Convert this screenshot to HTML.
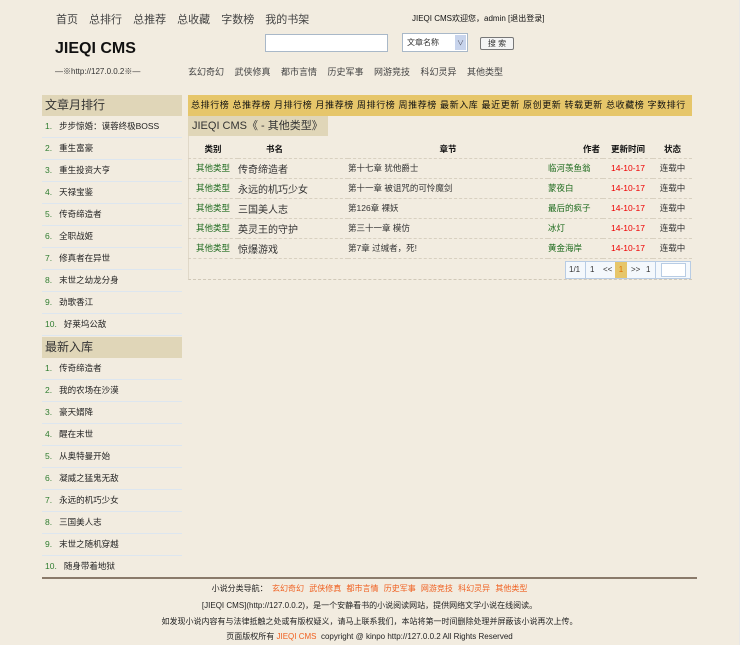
<!DOCTYPE html>
<html><head><meta charset="utf-8"><style>
*{margin:0;padding:0;box-sizing:border-box}
body{width:750px;height:645px;background:#f2ece0;font-family:"Liberation Sans","Noto Sans CJK SC",sans-serif;font-size:9px;color:#333;position:relative;overflow:hidden}
.a{position:absolute;white-space:nowrap}
.sb{position:absolute;left:739px;top:0;width:11px;height:645px;background:#fff;border-left:1px solid #e8e8e8}
.side{position:absolute;left:42px;width:140px}
.side h3{height:21px;background:#e0d6b8;font-weight:normal;font-size:12px;line-height:21px;padding-left:3px;color:#333}
.side li{list-style:none;height:22px;line-height:21px;border-bottom:1px solid #dde6ef;padding-left:3px;font-size:8.5px;color:#222}
.side li b{font-weight:normal;color:#2f7d2f;margin-right:7px}
table{border-collapse:collapse;position:absolute;left:188px;top:140px;width:504px;font-size:8.5px}
td,th{height:20px;border-bottom:1px dashed #d8d0c0;white-space:nowrap}
th{font-weight:bold;height:18px;color:#111}
.g{color:#1e6b1e}.r{color:#e00}
</style></head><body>
<div class="sb"></div>
<div class="a" style="left:56px;top:11px;font-size:11px;color:#444;word-spacing:8px">首页 总排行 总推荐 总收藏 字数榜 我的书架</div>
<div class="a" style="left:412px;top:13px;font-size:8px;color:#111">JIEQI CMS欢迎您，admin [退出登录]</div>
<div class="a" style="left:55px;top:40px;font-size:16px;font-weight:bold;color:#111">JIEQI CMS</div>
<div class="a" style="left:55px;top:66px;font-size:8px;color:#333">—※http://127.0.0.2※—</div>
<div class="a" style="left:265px;top:34px;width:123px;height:18px;background:#fff;border:1px solid #a9b8c8"></div>
<div class="a" style="left:402px;top:33px;width:66px;height:19px;background:#fff;border:1px solid #a9b8c8;font-size:8px;line-height:17px;padding-left:4px">文章名称<span style="position:absolute;right:1px;top:1px;width:11px;height:15px;background:#c8d4ec;font-size:7px;text-align:center;color:#556">∨</span></div>
<div class="a" style="left:480px;top:37px;width:34px;height:13px;background:#f4f4f4;border:1px solid #777;border-radius:2px;font-size:8px;text-align:center;line-height:11px">搜 索</div>
<div class="a" style="left:188px;top:65px;font-size:9px;color:#444;word-spacing:8px">玄幻奇幻 武侠修真 都市言情 历史军事 网游竞技 科幻灵异 其他类型</div>

<div class="side" style="top:95px"><h3>文章月排行</h3><ul>
<li><b>1.</b>步步惊婚：谟蓉终极BOSS</li><li><b>2.</b>重生富豪</li><li><b>3.</b>重生投资大亨</li><li><b>4.</b>天禄宝鉴</li><li><b>5.</b>传奇缔造者</li><li><b>6.</b>全职战姬</li><li><b>7.</b>修真者在异世</li><li><b>8.</b>末世之幼龙分身</li><li><b>9.</b>劲歌香江</li><li><b>10.</b>好莱坞公敌</li></ul>
<h3 style="margin-top:1px">最新入库</h3><ul>
<li><b>1.</b>传奇缔造者</li><li><b>2.</b>我的农场在沙漠</li><li><b>3.</b>豪天婿降</li><li><b>4.</b>醒在末世</li><li><b>5.</b>从奥特曼开始</li><li><b>6.</b>凝威之猛鬼无敌</li><li><b>7.</b>永远的机巧少女</li><li><b>8.</b>三国美人志</li><li><b>9.</b>末世之随机穿越</li><li><b>10.</b>随身带着地狱</li></ul></div>

<div class="a" style="left:188px;top:95px;width:504px;height:185px;border-left:1px solid #e0d8c8;border-bottom:1px dashed #d0c8b8"></div>
<div class="a" style="left:188px;top:95px;width:504px;height:21px;background:#e6c66a;font-size:9px;line-height:21px;padding-left:3px;color:#111;letter-spacing:0.6px">总排行榜 总推荐榜 月排行榜 月推荐榜 周排行榜 周推荐榜 最新入库 最近更新 原创更新 转载更新 总收藏榜 字数排行</div>
<div class="a" style="left:188px;top:116px;width:140px;height:20px;background:#e0d6b8;font-size:11px;line-height:20px;padding-left:4px;color:#333">JIEQI CMS《 - 其他类型》</div>
<table>
<tr><th style="width:50px">类别</th><th style="width:110px;text-align:left;padding-left:28px">书名</th><th style="width:200px">章节</th><th style="width:55px;text-align:right;padding-right:3px">作者</th><th style="width:50px">更新时间</th><th>状态</th></tr>
<tr><td class="g" style="text-align:center">其他类型</td><td style="font-size:10px">传奇缔造者</td><td>第十七章 犹他爵士</td><td class="g">临河羡鱼翁</td><td class="r" style="text-align:center">14-10-17</td><td style="text-align:center">连载中</td></tr>
<tr><td class="g" style="text-align:center">其他类型</td><td style="font-size:10px">永远的机巧少女</td><td>第十一章 被诅咒的可怜魔剑</td><td class="g">蒙夜白</td><td class="r" style="text-align:center">14-10-17</td><td style="text-align:center">连载中</td></tr>
<tr><td class="g" style="text-align:center">其他类型</td><td style="font-size:10px">三国美人志</td><td>第126章 裸妖</td><td class="g">最后的疯子</td><td class="r" style="text-align:center">14-10-17</td><td style="text-align:center">连载中</td></tr>
<tr><td class="g" style="text-align:center">其他类型</td><td style="font-size:10px">英灵王的守护</td><td>第三十一章 模仿</td><td class="g">冰灯</td><td class="r" style="text-align:center">14-10-17</td><td style="text-align:center">连载中</td></tr>
<tr><td class="g" style="text-align:center">其他类型</td><td style="font-size:10px">惊爆游戏</td><td>第7章 过缄者，死!</td><td class="g">黄金海岸</td><td class="r" style="text-align:center">14-10-17</td><td style="text-align:center">连载中</td></tr>
</table>
<div class="a" style="left:565px;top:261px;width:126px;height:18px;background:#f4f8fc;border:1px solid #b8cce4;font-size:8px;line-height:16px">
<span class="a" style="left:3px">1/1</span><span class="a" style="left:19px;top:0;width:1px;height:16px;background:#b8cce4"></span>
<span class="a" style="left:24px">1</span><span class="a" style="left:37px">&lt;&lt;</span>
<span class="a" style="left:49px;top:0;width:12px;height:16px;background:#e6c66a;color:#e07000;text-align:center">1</span>
<span class="a" style="left:65px">&gt;&gt;</span><span class="a" style="left:80px">1</span>
<span class="a" style="left:89px;top:0;width:1px;height:16px;background:#b8cce4"></span>
<span class="a" style="left:95px;top:1px;width:25px;height:14px;background:#fff;border:1px solid #b8cce4"></span></div>

<div class="a" style="left:42px;top:577px;width:655px;height:2px;background:#8a7a6a"></div>
<div class="a" style="left:0;width:739px;top:583px;text-align:center;font-size:8px;color:#222">小说分类导航：&nbsp; <span style="color:#f06020;word-spacing:3px">玄幻奇幻 武侠修真 都市言情 历史军事 网游竞技 科幻灵异 其他类型</span></div>
<div class="a" style="left:0;width:739px;top:600px;text-align:center;font-size:8px;color:#222">[JIEQI CMS](http://127.0.0.2)，是一个安静看书的小说阅读网站，提供网络文学小说在线阅读。</div>
<div class="a" style="left:0;width:739px;top:616px;text-align:center;font-size:8px;color:#222">如发现小说内容有与法律抵触之处或有版权疑义，请马上联系我们，本站将第一时间删除处理并屏蔽该小说再次上传。</div>
<div class="a" style="left:0;width:739px;top:631px;text-align:center;font-size:8px;color:#222">页面版权所有 <span style="color:#f06020">JIEQI CMS</span> &nbsp;copyright @ kinpo http://127.0.0.2 All Rights Reserved</div>
</body></html>
